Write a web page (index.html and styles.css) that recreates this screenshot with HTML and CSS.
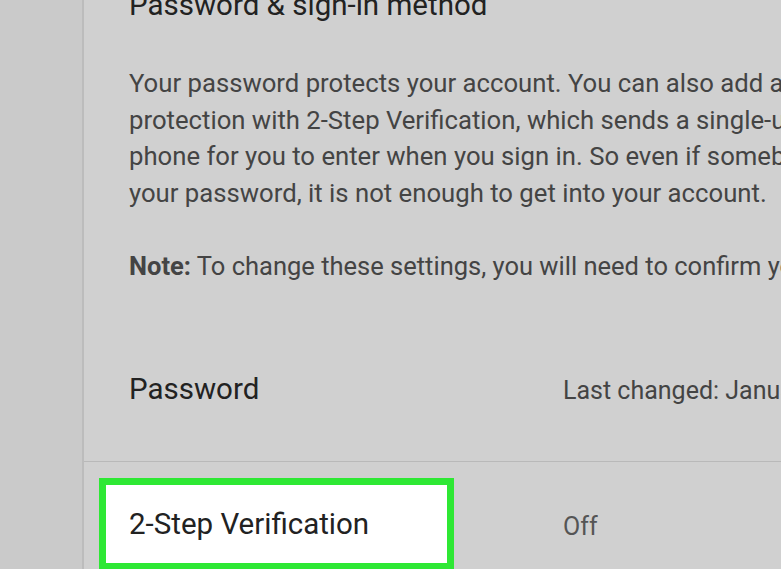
FILE: index.html
```html
<!DOCTYPE html>
<html>
<head>
<meta charset="utf-8">
<link rel="stylesheet" href="styles.css">
</head>
<body>
<div class="page">
  <div class="rail"></div>
  <div class="card">
    <div class="intro">
      <h2 class="title">Password &amp; sign-in method</h2>
      <p class="desc">Your password protects your account. You can also add an extra layer of<br>protection with 2-Step Verification, which sends a single-use code to your<br>phone for you to enter when you sign in. So even if somebody manages to steal<br>your password, it is not enough to get into your account.</p>
      <p class="note"><b>Note:</b> To change these settings, you will need to confirm your password.</p>
    </div>
    <div class="row row-password">
      <div class="label">Password</div>
      <div class="value">Last changed: January 1, 2017</div>
    </div>
    <div class="row row-2sv">
      <div class="label highlight">2-Step Verification</div>
      <div class="value value-off">Off</div>
    </div>
  </div>
</div>
</body>
</html>
```

FILE: styles.css
```css
html, body {
  margin: 0;
  padding: 0;
  height: 100%;
  overflow: hidden;
  background: #cbcbcb;
}
.page {
  display: flex;
  height: 569px;
  font-family: Roboto, "Noto Sans", sans-serif;
}
.rail {
  width: 82px;
  flex: none;
  background: #cacaca;
  border-right: 2px solid #bcbcbc;
}
.card {
  flex: 1;
  min-width: 0;
  background: #d0d0d0;
  overflow: hidden;
}
.intro {
  padding-left: 45px;
}
.title {
  margin: -13px 0 0 0;
  font-size: 29.5px;
  font-weight: 400;
  color: #222;
  line-height: 36px;
  white-space: nowrap;
}
.desc {
  margin: 42px 0 0 0;
  font-size: 25.7px;
  line-height: 36.5px;
  color: #444;
  white-space: nowrap;
}
.note {
  margin: 36.5px 0 0 0;
  font-size: 25.5px;
  line-height: 36.5px;
  color: #444;
  white-space: nowrap;
}
.note b {
  font-weight: 700;
}
.row {
  display: flex;
  white-space: nowrap;
}
.row-password {
  height: 178px;
  box-sizing: border-box;
  padding-left: 45px;
  padding-top: 87px;
  align-items: baseline;
  border-bottom: 1px solid #b9b9b9;
}
.label {
  font-size: 29.5px;
  line-height: 36px;
  color: #222;
  width: 434px;
  flex: none;
}
.value {
  font-size: 25px;
  line-height: 36.5px;
  color: #444;
}
.row-2sv {
  padding-left: 15px;
  padding-top: 16px;
  align-items: flex-start;
}
.highlight {
  width: 318px;
  height: 78px;
  border: 7px solid #2ee834;
  background: #ffffff;
  padding-left: 23px;
  display: flex;
  align-items: center;
  margin-right: 109px;
}
.value-off {
  padding-top: 31px;
  color: #555;
}
```
